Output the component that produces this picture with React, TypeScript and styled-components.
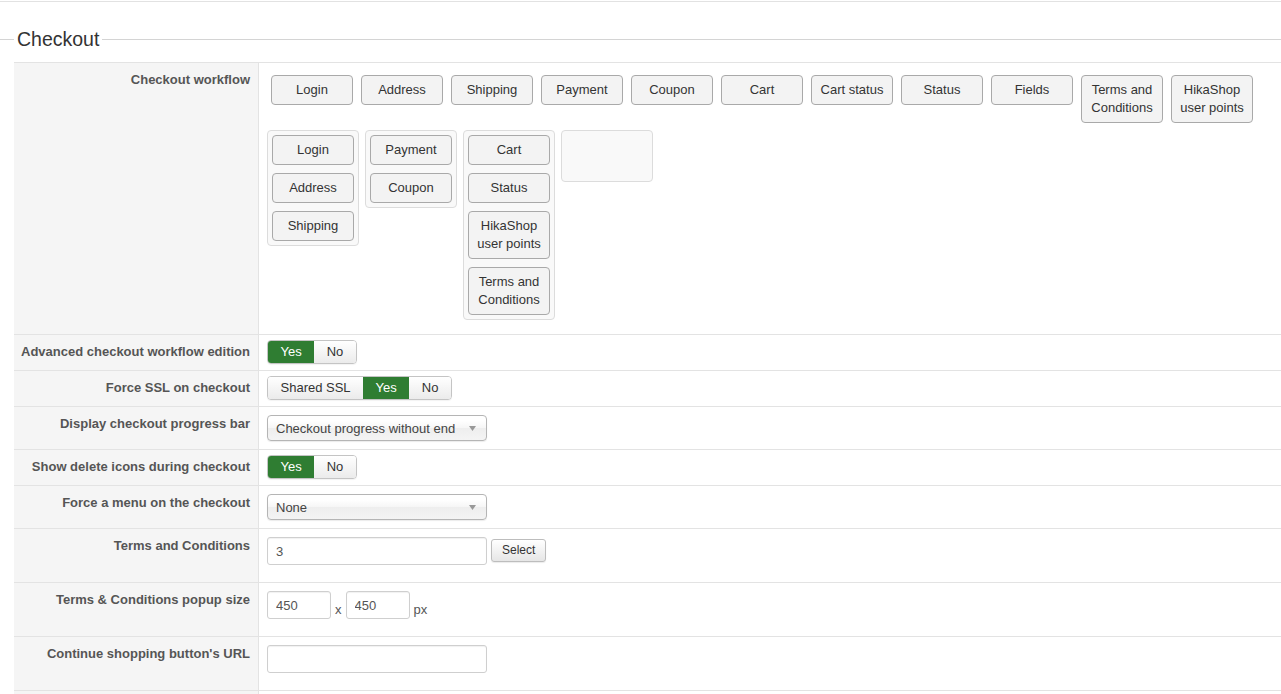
import styled, { createGlobalStyle } from "styled-components";

const GlobalStyle = createGlobalStyle`
  html, body {
    margin: 0;
    padding: 0;
    background: #fff;
    overflow: hidden;
  }
  body {
    font-family: "Liberation Sans", Arial, sans-serif;
    font-size: 13px;
    color: #333;
  }
`;

const topButtons = [
  ["Login"],
  ["Address"],
  ["Shipping"],
  ["Payment"],
  ["Coupon"],
  ["Cart"],
  ["Cart status"],
  ["Status"],
  ["Fields"],
  ["Terms and", "Conditions"],
  ["HikaShop", "user points"],
];

const workflowColumns = [
  [["Login"], ["Address"], ["Shipping"]],
  [["Payment"], ["Coupon"]],
  [["Cart"], ["Status"], ["HikaShop", "user points"], ["Terms and", "Conditions"]],
  [],
];

function StepButton({ lines }: { lines: string[] }) {
  return (
    <Style.Step>
      {lines.map((l, i) => (
        <span key={i}>{l}</span>
      ))}
    </Style.Step>
  );
}

function Toggle({ options, active }: { options: string[]; active: string }) {
  return (
    <Style.Toggle>
      {options.map((o) => (
        <Style.ToggleOption key={o} $active={o === active}>
          {o}
        </Style.ToggleOption>
      ))}
    </Style.Toggle>
  );
}

function Dropdown({ value }: { value: string }) {
  return (
    <Style.Dropdown>
      <span>{value}</span>
      <svg width="7" height="5" viewBox="0 0 7 5">
        <path d="M0 0 L7 0 L3.5 5 Z" fill="#999" />
      </svg>
    </Style.Dropdown>
  );
}

export default function App() {
  return (
    <>
      <GlobalStyle />
      <Style.TopRule />
      <Style.Fieldset>
        <legend>Checkout</legend>
        <Style.Table>
          <Style.Row>
            <Style.Label>Checkout workflow</Style.Label>
            <Style.Value $pad="8px 8px">
              <Style.StepRow>
                {topButtons.map((b, i) => (
                  <StepButton key={i} lines={b} />
                ))}
              </Style.StepRow>
              <Style.Columns>
                {workflowColumns.map((col, i) => (
                  <Style.Column key={i}>
                    {col.map((b, j) => (
                      <StepButton key={j} lines={b} />
                    ))}
                  </Style.Column>
                ))}
              </Style.Columns>
            </Style.Value>
          </Style.Row>

          <Style.Row>
            <Style.Label>Advanced checkout workflow edition</Style.Label>
            <Style.Value>
              <Toggle options={["Yes", "No"]} active="Yes" />
            </Style.Value>
          </Style.Row>

          <Style.Row>
            <Style.Label>Force SSL on checkout</Style.Label>
            <Style.Value>
              <Toggle options={["Shared SSL", "Yes", "No"]} active="Yes" />
            </Style.Value>
          </Style.Row>

          <Style.Row>
            <Style.Label>Display checkout progress bar</Style.Label>
            <Style.Value>
              <Dropdown value="Checkout progress without end" />
            </Style.Value>
          </Style.Row>

          <Style.Row>
            <Style.Label>Show delete icons during checkout</Style.Label>
            <Style.Value>
              <Toggle options={["Yes", "No"]} active="Yes" />
            </Style.Value>
          </Style.Row>

          <Style.Row>
            <Style.Label>Force a menu on the checkout</Style.Label>
            <Style.Value>
              <Dropdown value="None" />
            </Style.Value>
          </Style.Row>

          <Style.Row>
            <Style.Label>Terms and Conditions</Style.Label>
            <Style.Value>
              <Style.Inline>
                <Style.TextInput $width={220} value="3" readOnly />
                <Style.SmallButton>Select</Style.SmallButton>
              </Style.Inline>
            </Style.Value>
          </Style.Row>

          <Style.Row>
            <Style.Label>Terms &amp; Conditions popup size</Style.Label>
            <Style.Value>
              <Style.Inline>
                <Style.TextInput $width={64} value="450" readOnly />
                <Style.Unit>x</Style.Unit>
                <Style.TextInput $width={64} value="450" readOnly />
                <Style.Unit>px</Style.Unit>
              </Style.Inline>
            </Style.Value>
          </Style.Row>

          <Style.Row>
            <Style.Label>Continue shopping button's URL</Style.Label>
            <Style.Value>
              <Style.Inline>
                <Style.TextInput $width={220} value="" readOnly />
              </Style.Inline>
            </Style.Value>
          </Style.Row>

          <Style.Row>
            <Style.Label />
            <Style.Value $pad="5px 8px 40px" />
          </Style.Row>
        </Style.Table>
      </Style.Fieldset>
    </>
  );
}

const Style = {
  TopRule: styled.div`
    height: 1px;
    border-bottom: 1px solid #e2e2e2;
  `,
  Fieldset: styled.fieldset`
    margin: 25px 0 0;
    padding: 0 0 0 14px;
    border: 0;
    border-top: 1px solid #d4d4d4;
    min-width: 0;

    legend {
      padding: 0 3px;
      margin-left: 0;
      font-size: 19.5px;
      line-height: 24px;
      color: #333;
    }
  `,
  Table: styled.div`
    margin-top: 11px;
    border-top: 1px solid #e3e3e3;
  `,
  Row: styled.div`
    display: grid;
    grid-template-columns: 245px 1fr;
    border-bottom: 1px solid #e3e3e3;
  `,
  Label: styled.div`
    background: #f5f5f5;
    border-right: 1px solid #e3e3e3;
    padding: 8px 8px 0 4px;
    text-align: right;
    white-space: nowrap;
    font-weight: bold;
    line-height: 18px;
    color: #555;
  `,
  Value: styled.div<{ $pad?: string }>`
    padding: ${(p) => p.$pad ?? "5px 8px 6px"};
    min-width: 0;
  `,
  StepRow: styled.div`
    display: flex;
    align-items: flex-start;
    gap: 8px;
    padding: 4px;
  `,
  Step: styled.div`
    box-sizing: border-box;
    width: 82px;
    flex: none;
    padding: 5px 2px;
    display: flex;
    flex-direction: column;
    align-items: center;
    line-height: 18px;
    border: 1px solid #a9a9a9;
    border-radius: 4px;
    background: #f3f3f3;
    color: #333;
    white-space: nowrap;
  `,
  Columns: styled.div`
    display: flex;
    align-items: flex-start;
    gap: 6px;
    margin: 3px 0 6px;
  `,
  Column: styled.div`
    box-sizing: border-box;
    width: 92px;
    min-height: 52px;
    padding: 4px;
    display: flex;
    flex-direction: column;
    gap: 8px;
    border: 1px solid #dcdcdc;
    border-radius: 4px;
    background: #f9f9f9;
  `,
  Toggle: styled.div`
    display: inline-flex;
    height: 24px;
    box-sizing: border-box;
    border: 1px solid #c4c4c4;
    border-radius: 4px;
    overflow: hidden;
    box-shadow: 0 1px 1px rgba(0, 0, 0, 0.05);
  `,
  ToggleOption: styled.div<{ $active: boolean }>`
    padding: 0 12.5px;
    line-height: 22px;
    font-size: 13px;
    color: ${(p) => (p.$active ? "#fff" : "#333")};
    background: ${(p) =>
      p.$active ? "#2f7d32" : "linear-gradient(#ffffff, #ebebeb)"};
  `,
  Dropdown: styled.div`
    box-sizing: border-box;
    width: 220px;
    height: 26px;
    margin: 3px 0 2px;
    padding: 0 10px 0 8px;
    display: flex;
    align-items: center;
    justify-content: space-between;
    border: 1px solid #b5b5b5;
    border-radius: 4px;
    background: linear-gradient(#ffffff 20%, #f6f6f6 50%, #eeeeee 52%, #f4f4f4 100%);
    box-shadow: 0 1px 1px rgba(0, 0, 0, 0.08);
    color: #444;
    font-size: 13px;
  `,
  Inline: styled.div`
    display: flex;
    align-items: flex-start;
    margin: 3px 0 11px;
  `,
  TextInput: styled.input<{ $width: number }>`
    box-sizing: border-box;
    width: ${(p) => p.$width}px;
    height: 28px;
    padding: 0 8px;
    border: 1px solid #cfcfcf;
    border-radius: 3px;
    box-shadow: inset 0 1px 1px rgba(0, 0, 0, 0.06);
    font-family: "Liberation Sans", Arial, sans-serif;
    font-size: 13px;
    color: #555;
    background: #fff;
    outline: none;
  `,
  SmallButton: styled.div`
    box-sizing: border-box;
    height: 23px;
    margin: 2px 0 0 4px;
    padding: 0 10px;
    line-height: 21px;
    font-size: 12px;
    color: #333;
    border: 1px solid #bdbdbd;
    border-radius: 3px;
    background: linear-gradient(#ffffff, #e6e6e6);
    box-shadow: 0 1px 1px rgba(0, 0, 0, 0.08);
  `,
  Unit: styled.span`
    padding: 10px 4px 0;
    line-height: 18px;
    color: #555;
  `,
};
